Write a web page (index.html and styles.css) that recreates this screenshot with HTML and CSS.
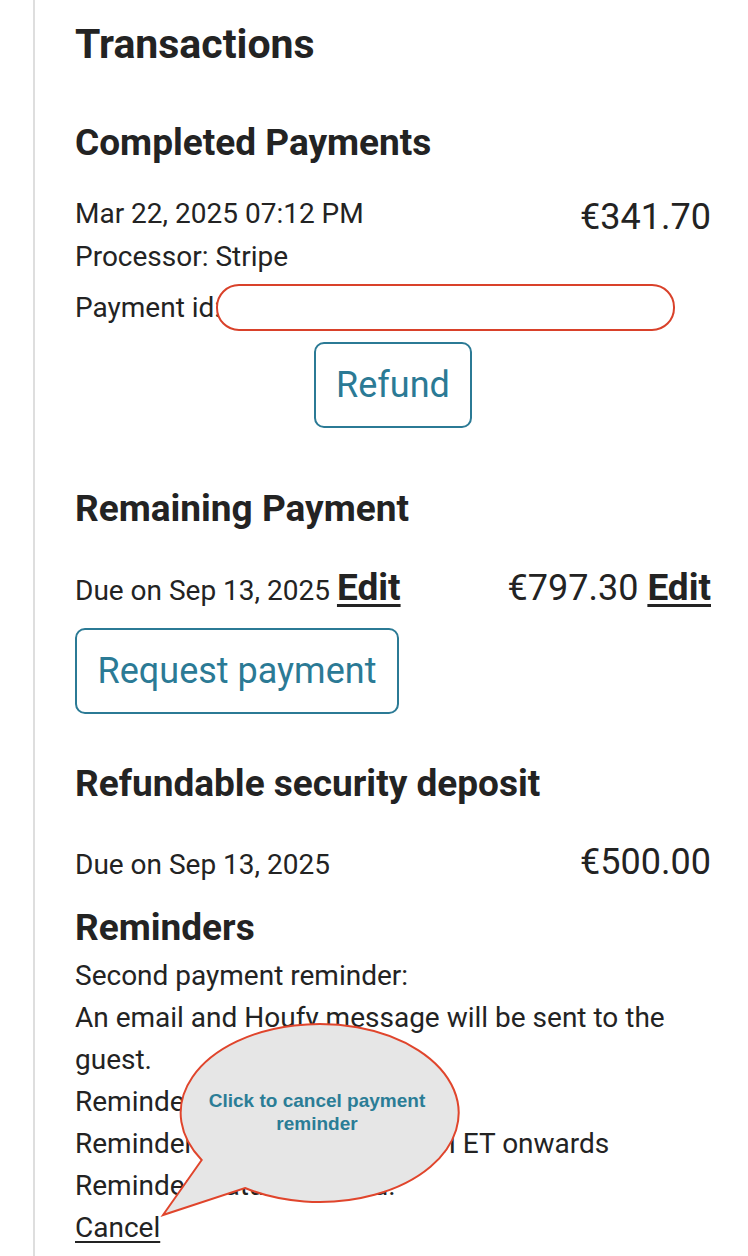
FILE: index.html
```html
<!DOCTYPE html>
<html lang="en">
<head>
<meta charset="utf-8">
<title>Transactions</title>
<link rel="stylesheet" href="styles.css">
</head>
<body>
<div class="screen">
  <main class="page">
    <h1 class="title">Transactions</h1>

    <section class="block">
      <h2 class="heading heading-first">Completed Payments</h2>
      <div class="payment">
        <div class="payment-top">
          <div class="payment-info">
            <div class="line">Mar 22, 2025 07:12 PM</div>
            <div class="line">Processor: Stripe</div>
          </div>
          <div class="amount">€341.70</div>
        </div>
        <div class="id-row">
          <span class="id-label">Payment id:</span>
          <span class="id-field"></span>
        </div>
      </div>
      <div class="center">
        <button class="btn btn-refund" type="button">Refund</button>
      </div>
    </section>

    <section class="block">
      <h2 class="heading heading-remaining">Remaining Payment</h2>
      <div class="due-row">
        <div class="due">Due on Sep 13, 2025 <a class="edit" href="#">Edit</a></div>
        <div class="amount-inline">€797.30 <a class="edit" href="#">Edit</a></div>
      </div>
      <button class="btn btn-request" type="button">Request payment</button>
    </section>

    <section class="block">
      <h2 class="heading heading-deposit">Refundable security deposit</h2>
      <div class="due-row due-row-deposit">
        <div class="due">Due on Sep 13, 2025</div>
        <div class="amount-inline">€500.00</div>
      </div>
    </section>

    <section class="block">
      <h2 class="heading heading-reminders">Reminders</h2>
      <div class="reminders">
        <div>Second payment reminder:</div>
        <div>An email and Houfy message will be sent to the guest.</div>
        <div>Reminder date: Sep 6, 2025</div>
        <div>Reminder time: from 09:00 AM ET onwards</div>
        <div>Reminder status: Queued.</div>
        <div><a class="cancel" href="#">Cancel</a></div>
      </div>
    </section>
  </main>

  <svg class="callout" width="320" height="210" viewBox="0 0 320 210" aria-label="Click to cancel payment reminder">
    <path d="M51.7,145 L13,200 L95,173 A139,89 0 1,0 51.7,145 Z" fill="#e6e6e6" stroke="#e0452c" stroke-width="2" stroke-linejoin="miter"/>
    <text class="callout-text" x="167" y="92" text-anchor="middle">Click to cancel payment</text>
    <text class="callout-text" x="167" y="115" text-anchor="middle">reminder</text>
  </svg>
</div>
</body>
</html>
```

FILE: styles.css
```css
* {
  box-sizing: border-box;
}

html, body {
  margin: 0;
  padding: 0;
  background: #ffffff;
}

body {
  font-family: Roboto, "Liberation Sans", Arial, sans-serif;
  color: #232323;
}

.screen {
  position: relative;
  width: 748px;
  min-height: 1256px;
  overflow: hidden;
}

.page {
  margin-left: 33px;
  border-left: 2px solid #dedede;
  padding: 20px 37px 0 40px;
  min-height: 1256px;
}

.title {
  margin: 0;
  font-size: 41px;
  line-height: 48px;
  font-weight: 700;
}

.heading {
  margin: 0;
  font-size: 37px;
  line-height: 40px;
  font-weight: 700;
}

.heading-first {
  margin-top: 55px;
}

.payment {
  margin-top: 29px;
}

.payment-top {
  display: flex;
  justify-content: space-between;
  align-items: flex-start;
}

.payment-info {
  display: flex;
  flex-direction: column;
}

.line {
  font-size: 28px;
  line-height: 43px;
}

.id-row {
  display: flex;
  align-items: center;
  margin-top: 6px;
  font-size: 28px;
  line-height: 46px;
}

.id-label {
  white-space: nowrap;
}

.id-field {
  display: block;
  width: 459px;
  height: 47px;
  margin-left: -5px;
  border: 2px solid #d9412a;
  border-radius: 23px;
  background: #ffffff;
}

.amount {
  font-size: 36px;
  line-height: 42px;
  margin-top: 4px;
  white-space: nowrap;
}

.center {
  display: flex;
  justify-content: center;
  margin-top: 11px;
}

.btn {
  font-family: Roboto, "Liberation Sans", Arial, sans-serif;
  font-size: 36px;
  color: #2b7a95;
  background: #ffffff;
  border: 2px solid #2b7a95;
  border-radius: 10px;
  padding: 0;
  cursor: pointer;
}

.btn-refund {
  width: 158px;
  height: 86px;
}

.btn-request {
  display: block;
  width: 324px;
  height: 86px;
  margin-top: 16px;
}

.heading-remaining {
  margin-top: 61px;
}

.due-row {
  display: flex;
  justify-content: space-between;
  align-items: baseline;
  margin-top: 38px;
  line-height: 42px;
}

.due {
  font-size: 28px;
}

.amount-inline {
  font-size: 36px;
}

.edit {
  font-size: 37px;
  font-weight: 700;
  color: #232323;
  text-decoration: underline;
  text-decoration-thickness: 3px;
  text-underline-offset: 4px;
}

.heading-deposit {
  margin-top: 50px;
}

.due-row-deposit {
  margin-top: 37px;
}

.heading-reminders {
  margin-top: 22px;
}

.reminders {
  font-size: 28px;
  line-height: 42px;
  margin-top: 7px;
}

.cancel {
  color: #232323;
  text-decoration: underline;
  text-decoration-thickness: 2px;
  text-underline-offset: 4px;
}

.callout {
  position: absolute;
  left: 150px;
  top: 1015px;
  overflow: visible;
}

.callout-text {
  font-family: "Liberation Sans", Arial, sans-serif;
  font-weight: 700;
  font-size: 19px;
  fill: #2b7d96;
}
```
